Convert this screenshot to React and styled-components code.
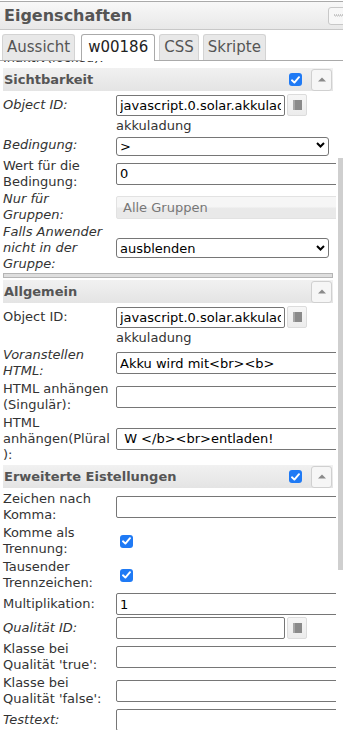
import React from 'react';
import styled, { createGlobalStyle, css } from 'styled-components';

const Global = createGlobalStyle`
  html, body { margin: 0; padding: 0; background: #fff; }
  body { font-family: "DejaVu Sans", Verdana, sans-serif; color: #333; }
  #root { width: 343px; }
`;

const Panel = styled.div`
  width: 343px;
  height: 730px;
  padding-top: 1px;
  box-sizing: border-box;
  display: flex;
  flex-direction: column;
  overflow: hidden;
`;

const TitleBar = styled.div`
  display: flex;
  align-items: center;
  justify-content: space-between;
  height: 27px;
  padding-left: 4px;
  border-top: 1px solid #aaa;
  border-bottom: 1px solid #c8c8c8;
  background: linear-gradient(#f8f8f8, #e8e8e8);
  overflow: hidden;
`;

const Title = styled.span`
  font-size: 16px;
  font-weight: bold;
  color: #555;
`;

const GripButton = styled.div`
  display: flex;
  align-items: center;
  justify-content: center;
  width: 22px;
  height: 18px;
  margin-right: -7px;
  box-sizing: border-box;
  border: 1px solid #c8c8c8;
  border-radius: 3px;
  background: #f7f7f7;
`;

const TabBar = styled.div`
  display: flex;
  gap: 4px;
  height: 26px;
  padding: 4px 0 0 2px;
  border-bottom: 1px solid #aaa;
`;

const Tab = styled.div`
  height: 26px;
  box-sizing: border-box;
  padding: 0 4px;
  border: 1px solid #d3d3d3;
  border-bottom: none;
  border-radius: 3px 3px 0 0;
  background: #e8e8e8;
  color: #555;
  font-size: 15px;
  line-height: 25px;
  ${p => p.active && css`
    height: 27px;
    padding: 0 6px;
    margin-left: 2px;
    background: #fff;
    border-color: #aaa;
    color: #222;
  `}
`;

const Body = styled.div`
  display: flex;
  flex: 1;
  min-height: 0;
`;

const Content = styled.div`
  width: 336px;
  overflow: hidden;
`;

/* the panel is scrolled down a little: the first row is cut under the tabs */
const Inner = styled.div`
  margin-top: -11px;
  padding-left: 3px;
`;

const Track = styled.div`
  width: 7px;
`;

const Thumb = styled.div`
  width: 5px;
  height: 412px;
  margin: 97px 0 0 2px;
  background: #cfcfcf;
`;

const GroupHeader = styled.div`
  display: flex;
  align-items: center;
  height: 23px;
  margin: 2px 3px 2px 0;
  padding-left: 1px;
  background: linear-gradient(#f1f1f1, #e4e4e4);
  font-size: 13px;
  font-weight: bold;
  color: #555;
`;

const GroupTitle = styled.span`
  flex: 1;
`;

const ToggleButton = styled.div`
  display: flex;
  align-items: center;
  justify-content: center;
  width: 21px;
  height: 22px;
  box-sizing: border-box;
  margin-left: 9px;
  margin-right: 1px;
  border: 1px solid #d0d0d0;
  border-radius: 3px;
  background: #f6f6f6;
`;

const Separator = styled.div`
  height: 5px;
  box-sizing: border-box;
  margin: 1px 3px 0 0;
  border: 1px solid #b5b5b5;
  background: #dedede;
`;

const Row = styled.div`
  display: grid;
  grid-template-columns: 113px auto;
  align-items: center;
  height: ${p => p.h}px;
`;

const Label = styled.div`
  font-size: 13px;
  line-height: 16px;
  white-space: nowrap;
  color: #333;
  font-style: ${p => (p.italic ? 'italic' : 'normal')};
`;

const Field = styled.div`
  display: flex;
  align-items: center;
  gap: 2px;
  white-space: nowrap;
`;

const TextInput = styled.input`
  width: ${p => p.w || 240}px;
  height: ${p => p.hh || 22}px;
  box-sizing: border-box;
  margin: 0;
  padding: 0 3px;
  border: 1px solid #767676;
  border-radius: 2px;
  background: #fff;
  color: #000;
  font-family: "DejaVu Sans", Verdana, sans-serif;
  font-size: 13px;
  outline: none;
`;

const PickButton = styled.div`
  display: flex;
  align-items: center;
  justify-content: center;
  width: 20px;
  height: 22px;
  box-sizing: border-box;
  border: 1px solid #dcdcdc;
  border-radius: 2px;
  background: linear-gradient(#f6f6f6, #ececec);
`;

const SelectBox = styled.div`
  position: relative;
  width: 213px;
  height: ${p => p.hh}px;
`;

const Select = styled.select`
  appearance: none;
  width: 100%;
  height: 100%;
  box-sizing: border-box;
  margin: 0;
  padding: 0 3px;
  border: 1px solid #767676;
  border-radius: 3px;
  background: #fff;
  color: #000;
  font-family: "DejaVu Sans", Verdana, sans-serif;
  font-size: 13px;
`;

const Chevron = styled.svg`
  position: absolute;
  right: 4px;
  top: 50%;
  margin-top: -3px;
  pointer-events: none;
`;

const Disabled = styled.div`
  width: 240px;
  height: 23px;
  box-sizing: border-box;
  padding-left: 6px;
  border: 1px solid #e2e2e2;
  border-radius: 2px;
  background: linear-gradient(#f6f6f6 45%, #e9e9e9 55%);
  color: #777;
  font-size: 13px;
  line-height: 21px;
`;

const Note = styled.div`
  font-size: 13px;
  line-height: 16px;
  color: #333;
`;

const CheckBox = styled.span`
  display: inline-flex;
  align-items: center;
  justify-content: center;
  width: 13px;
  height: 13px;
  border-radius: 3px;
  background: #1f7af5;
  margin-left: ${p => p.ml || 0}px;
`;

const Check = ({ ml }) => (
  <CheckBox ml={ml}>
    <svg width="9" height="8" viewBox="0 0 9 8">
      <path d="M1 4.3 L3.4 6.6 L8 1.2" fill="none" stroke="#fff" strokeWidth="1.9" strokeLinecap="round" strokeLinejoin="round" />
    </svg>
  </CheckBox>
);

const Toggle = () => (
  <ToggleButton>
    <svg width="8" height="5" viewBox="0 0 8 5">
      <polygon points="0,4.5 4,0.5 8,4.5" fill="#8a8a8a" />
    </svg>
  </ToggleButton>
);

const Pick = () => (
  <PickButton>
    <svg width="9" height="10" viewBox="0 0 9 10">
      <rect x="2" y="0" width="7" height="10" fill="#8a8a8a" />
      <rect x="0" y="0" width="2" height="10" fill="#c4c4c4" />
      <path d="M0 1h2M0 3h2M0 5h2M0 7h2M0 9h2" stroke="#8a8a8a" strokeWidth="1" />
    </svg>
  </PickButton>
);

const DropDown = ({ value, hh }) => (
  <SelectBox hh={hh}>
    <Select defaultValue={value}>
      <option>{value}</option>
    </Select>
    <Chevron width="9" height="6" viewBox="0 0 9 6">
      <path d="M1 1 L4.5 4.5 L8 1" fill="none" stroke="#000" strokeWidth="2" />
    </Chevron>
  </SelectBox>
);

const Group = ({ title, checked }) => (
  <GroupHeader>
    <GroupTitle>{title}</GroupTitle>
    {checked && <Check />}
    <Toggle />
  </GroupHeader>
);

const Lines = ({ lines, italic }) => (
  <Label italic={italic}>
    {lines.map((l, i) => (
      <div key={i}>{l}</div>
    ))}
  </Label>
);

export default function App() {
  return (
    <>
      <Global />
      <Panel>
        <TitleBar>
          <Title>Eigenschaften</Title>
          <GripButton>
            <svg width="10" height="3" viewBox="0 0 10 3">
              <path d="M0 1h1M2 1h1M4 1h1M6 1h1M8 1h1" stroke="#999" strokeWidth="1" />
              <path d="M1 2h1M3 2h1M5 2h1M7 2h1M9 2h1" stroke="#bbb" strokeWidth="1" />
            </svg>
          </GripButton>
        </TitleBar>
        <TabBar>
          <Tab>Aussicht</Tab>
          <Tab active>w00186</Tab>
          <Tab>CSS</Tab>
          <Tab>Skripte</Tab>
        </TabBar>
        <Body>
          <Content>
            <Inner>
              <Row h={16}>
                <Lines lines={['Inaktiv(locked):']} />
              </Row>

              <Group title="Sichtbarkeit" checked />
              <Row h={24}>
                <Lines italic lines={['Object ID:']} />
                <Field>
                  <TextInput w={169} hh={21} defaultValue="javascript.0.solar.akkuladung" />
                  <Pick />
                </Field>
              </Row>
              <Row h={17}>
                <span />
                <Note>akkuladung</Note>
              </Row>
              <Row h={22}>
                <Lines italic lines={['Bedingung:']} />
                <DropDown value=">" hh={19} />
              </Row>
              <Row h={35}>
                <Lines lines={['Wert für die', 'Bedingung:']} />
                <Field>
                  <TextInput defaultValue="0" />
                </Field>
              </Row>
              <Row h={32}>
                <Lines italic lines={['Nur für', 'Gruppen:']} />
                <Disabled>Alle Gruppen</Disabled>
              </Row>
              <Row h={49}>
                <Lines italic lines={['Falls Anwender', 'nicht in der', 'Gruppe:']} />
                <DropDown value="ausblenden" hh={20} />
              </Row>

              <Separator />

              <Group title="Allgemein" />
              <Row h={24}>
                <Lines lines={['Object ID:']} />
                <Field>
                  <TextInput w={169} hh={21} defaultValue="javascript.0.solar.akkuladung" />
                  <Pick />
                </Field>
              </Row>
              <Row h={17}>
                <span />
                <Note>akkuladung</Note>
              </Row>
              <Row h={34}>
                <Lines italic lines={['Voranstellen', 'HTML:']} />
                <Field>
                  <TextInput defaultValue="Akku wird mit<br><b>" />
                </Field>
              </Row>
              <Row h={34}>
                <Lines lines={['HTML anhängen', '(Singulär):']} />
                <Field>
                  <TextInput defaultValue="" />
                </Field>
              </Row>
              <Row h={49}>
                <Lines lines={['HTML', 'anhängen(Plüral', '):']} />
                <Field>
                  <TextInput defaultValue=" W </b><br>entladen!" />
                </Field>
              </Row>

              <Group title="Erweiterte Eistellungen" checked />
              <Row h={34}>
                <Lines lines={['Zeichen nach', 'Komma:']} />
                <Field>
                  <TextInput defaultValue="" />
                </Field>
              </Row>
              <Row h={34}>
                <Lines lines={['Komme als', 'Trennung:']} />
                <Field>
                  <Check ml={4} />
                </Field>
              </Row>
              <Row h={34}>
                <Lines lines={['Tausender', 'Trennzeichen:']} />
                <Field>
                  <Check ml={4} />
                </Field>
              </Row>
              <Row h={24}>
                <Lines lines={['Multiplikation:']} />
                <Field>
                  <TextInput defaultValue="1" />
                </Field>
              </Row>
              <Row h={24}>
                <Lines italic lines={['Qualität ID:']} />
                <Field>
                  <TextInput w={169} defaultValue="" />
                  <Pick />
                </Field>
              </Row>
              <Row h={34}>
                <Lines lines={['Klasse bei', "Qualität 'true':"]} />
                <Field>
                  <TextInput defaultValue="" />
                </Field>
              </Row>
              <Row h={34}>
                <Lines lines={['Klasse bei', "Qualität 'false':"]} />
                <Field>
                  <TextInput defaultValue="" />
                </Field>
              </Row>
              <Row h={24}>
                <Lines italic lines={['Testtext:']} />
                <Field>
                  <TextInput defaultValue="" />
                </Field>
              </Row>
            </Inner>
          </Content>
          <Track>
            <Thumb />
          </Track>
        </Body>
      </Panel>
    </>
  );
}
